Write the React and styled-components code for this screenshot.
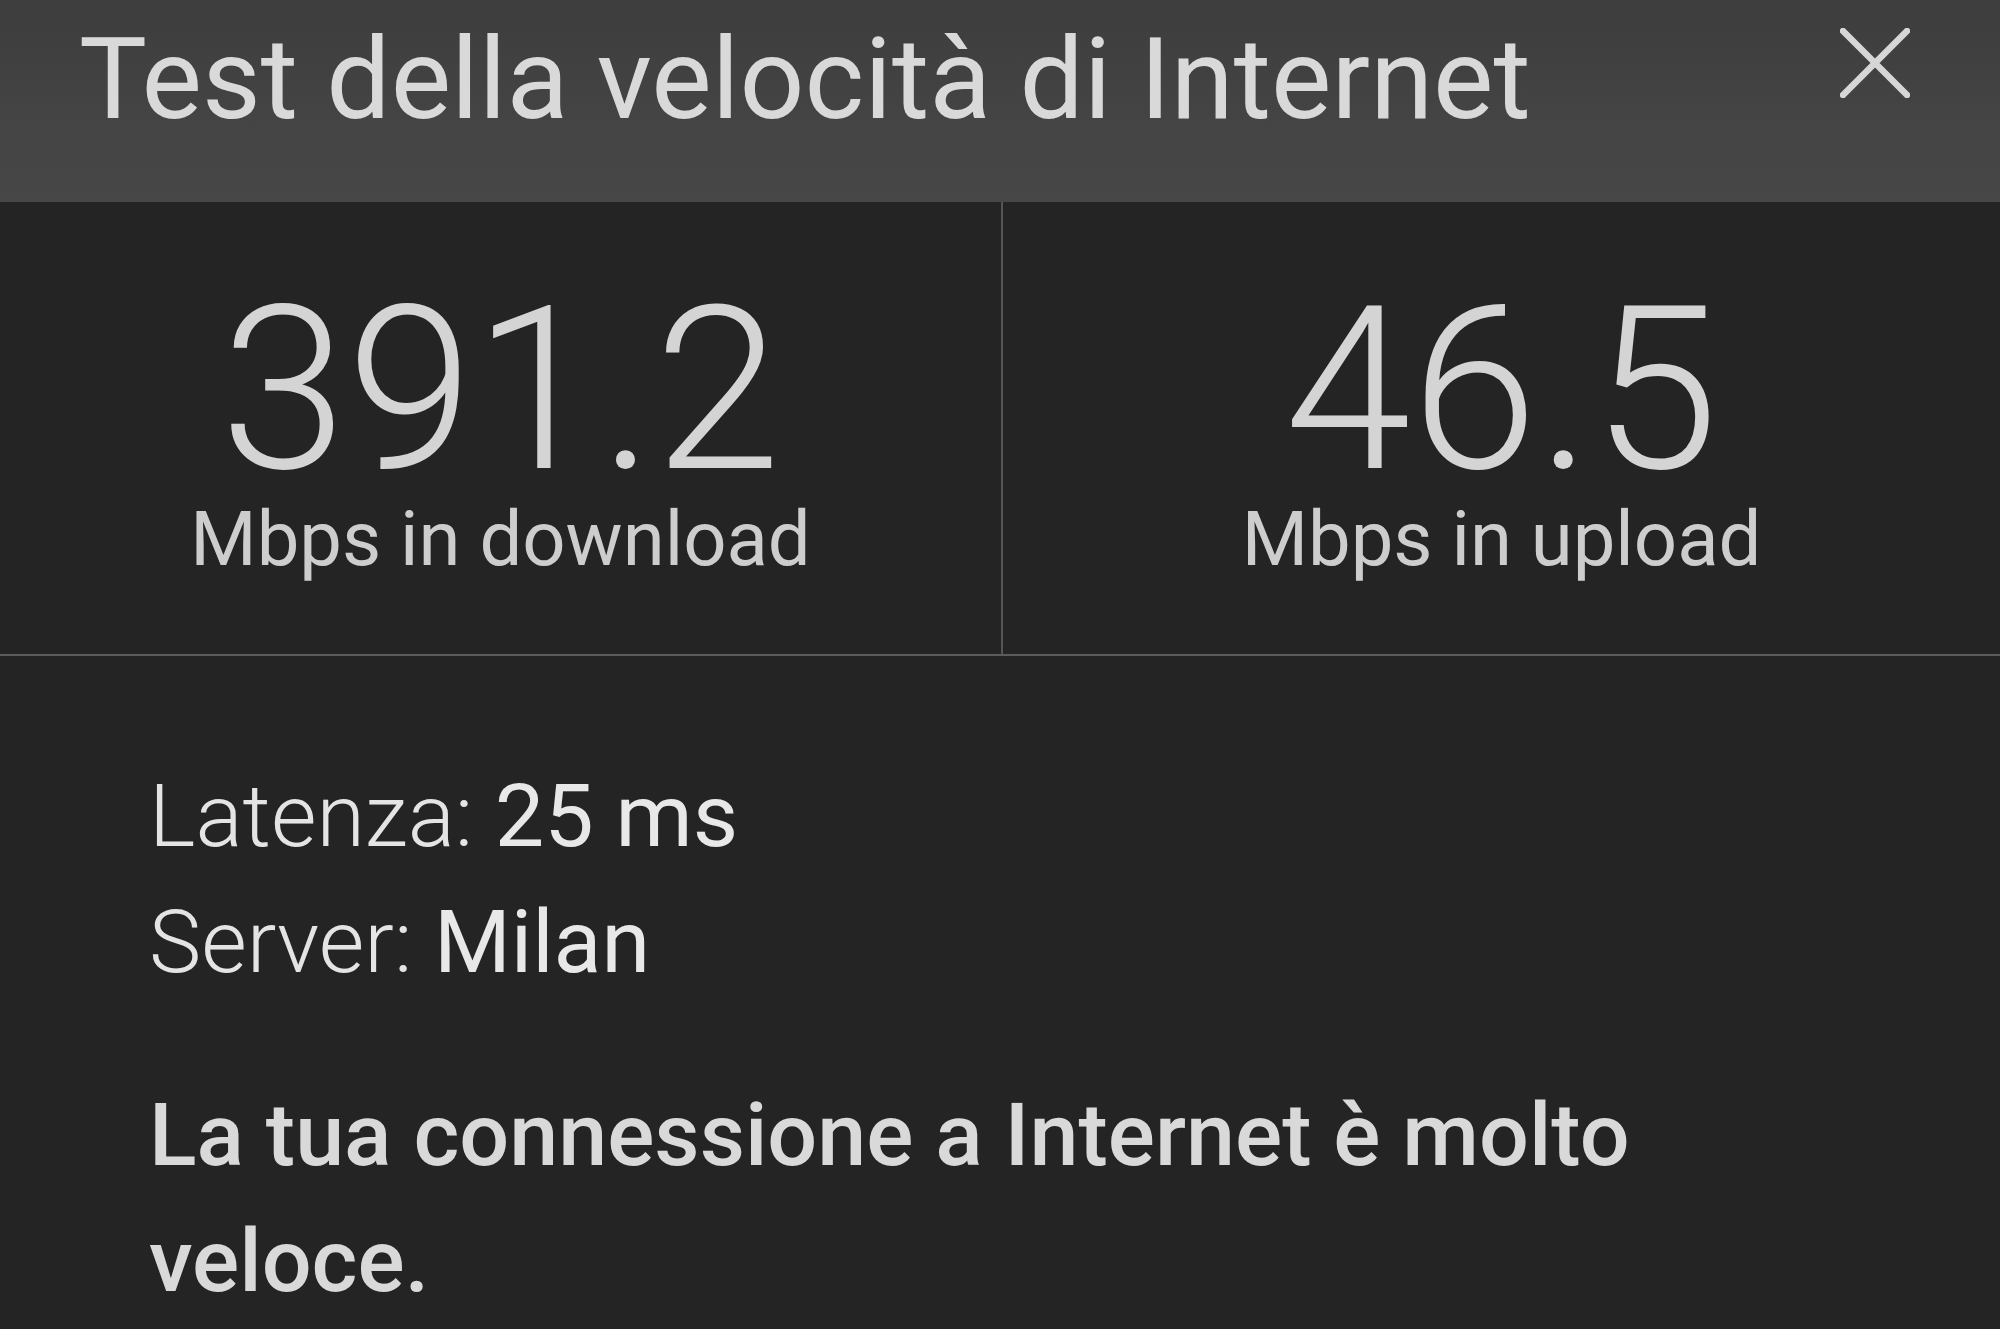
import React from "react";
import styled, { createGlobalStyle } from "styled-components";

const Global = createGlobalStyle`
  html, body { margin: 0; padding: 0; background: #242424; }
  body { font-family: Roboto, "Noto Sans", "Liberation Sans", sans-serif; }
  * { box-sizing: border-box; }
`;

const Page = styled.div`
  width: 2000px;
  height: 1329px;
  overflow: hidden;
  background: #242424;
  display: flex;
  flex-direction: column;
`;

const Header = styled.header`
  height: 202px;
  flex: none;
  background: linear-gradient(180deg, #3d3d3d 0%, #444444 60%, #474747 100%);
  display: flex;
  justify-content: space-between;
  align-items: flex-start;
  padding: 13px 90px 0 79px;
`;

const Title = styled.h1`
  margin: 0;
  font-size: 114px;
  font-weight: 400;
  line-height: 1.172;
  color: #d9d9d9;
`;

const CloseButton = styled.button`
  margin-top: 15px;
  width: 70px;
  height: 70px;
  padding: 0;
  border: 0;
  background: transparent;
  display: flex;
  align-items: center;
  justify-content: center;
`;

const Stats = styled.section`
  height: 454px;
  flex: none;
  display: grid;
  grid-template-columns: 1003px 1fr;
  border-bottom: 2px solid #5c5c5c;
`;

const StatCell = styled.div`
  display: flex;
  flex-direction: column;
  align-items: center;
  padding-top: 74px;
  border-right: ${(p) => (p.$divider ? "2px solid #555" : "none")};
`;

const StatValue = styled.div`
  font-size: 228px;
  font-weight: 300;
  line-height: 1;
  color: #d4d4d4;
`;

const StatLabel = styled.div`
  margin-top: 1px;
  font-size: 76px;
  font-weight: 400;
  line-height: 0.9;
  color: #cdcdcd;
`;

const Info = styled.section`
  padding: 97px 0 0 149px;
`;

const InfoLine = styled.div`
  font-size: ${(p) => p.$size}px;
  line-height: 126px;
  font-weight: 300;
  color: #e4e4e4;
`;

const InfoValue = styled.span`
  font-weight: 400;
  color: #e8e8e8;
`;

const Verdict = styled.p`
  margin: 67px 0 0;
  width: 1580px;
  font-size: 88px;
  line-height: 126px;
  font-weight: 500;
  color: #d9d9d9;
`;

function Stat({ value, label, divider }) {
  return (
    <StatCell $divider={divider}>
      <StatValue>{value}</StatValue>
      <StatLabel>{label}</StatLabel>
    </StatCell>
  );
}

export default function App() {
  return (
    <Page>
      <Global />
      <Header>
        <Title>Test della velocità di Internet</Title>
        <CloseButton aria-label="Chiudi">
          <svg width="70" height="70" viewBox="0 0 70 70">
            <path d="M3 3 L67 67 M67 3 L3 67" stroke="#d6d6d6" strokeWidth="6.5" strokeLinecap="square" />
          </svg>
        </CloseButton>
      </Header>
      <Stats>
        <Stat value="391.2" label="Mbps in download" divider />
        <Stat value="46.5" label="Mbps in upload" />
      </Stats>
      <Info>
        <InfoLine $size={88}>
          Latenza: <InfoValue>25 ms</InfoValue>
        </InfoLine>
        <InfoLine $size={88}>
          Server: <InfoValue>Milan</InfoValue>
        </InfoLine>
        <Verdict>La tua connessione a Internet è molto veloce.</Verdict>
      </Info>
    </Page>
  );
}
